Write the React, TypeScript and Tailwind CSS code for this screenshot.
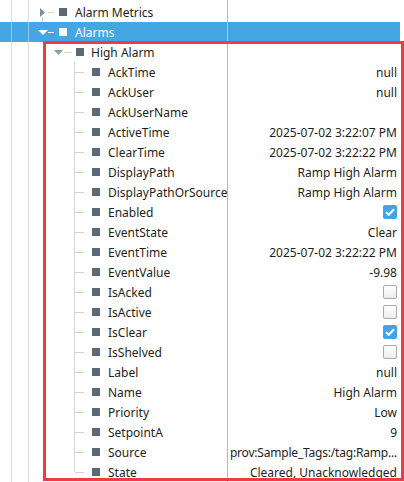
import React from "react";

interface PropRow {
  label: string;
  value?: string;
  check?: boolean;
}

const props: PropRow[] = [
  { label: "AckTime", value: "null" },
  { label: "AckUser", value: "null" },
  { label: "AckUserName", value: "" },
  { label: "ActiveTime", value: "2025-07-02 3:22:07 PM" },
  { label: "ClearTime", value: "2025-07-02 3:22:22 PM" },
  { label: "DisplayPath", value: "Ramp High Alarm" },
  { label: "DisplayPathOrSource", value: "Ramp High Alarm" },
  { label: "Enabled", check: true },
  { label: "EventState", value: "Clear" },
  { label: "EventTime", value: "2025-07-02 3:22:22 PM" },
  { label: "EventValue", value: "-9.98" },
  { label: "IsAcked", check: false },
  { label: "IsActive", check: false },
  { label: "IsClear", check: true },
  { label: "IsShelved", check: false },
  { label: "Label", value: "null" },
  { label: "Name", value: "High Alarm" },
  { label: "Priority", value: "Low" },
  { label: "SetpointA", value: "9" },
  { label: "Source", value: "prov:Sample_Tags:/tag:Ramp..." },
  { label: "State", value: "Cleared, Unacknowledged" },
];

// the two ancestor guide lines at x=11 and x=28
const Guides = ({ selected }: { selected?: boolean }) => (
  <>
    <div className="w-[11px] flex-none" />
    <div className={selected ? "w-px flex-none self-stretch bg-[#8ccaf0]" : "w-px flex-none self-stretch bg-[#dedede]"} />
    <div className="w-[16px] flex-none" />
    <div className={selected ? "w-px flex-none self-stretch bg-[#8ccaf0]" : "w-px flex-none self-stretch bg-[#dedede]"} />
  </>
);

const Separator = ({ selected }: { selected?: boolean }) => (
  <div className={selected ? "w-px flex-none self-stretch bg-[#9fd0f0]" : "w-px flex-none self-stretch bg-[#b8b8b8]"} />
);

const Square = ({ color }: { color: string }) => (
  <div className={`w-2 h-2 flex-none ${color}`} />
);

const Checkbox = ({ checked }: { checked: boolean }) =>
  checked ? (
    <div className="w-[14px] h-[14px] rounded-[2px] bg-[#44a3e6] flex items-center justify-center">
      <svg width="10" height="8" viewBox="0 0 10 8">
        <path d="M1 4.2 L3.8 6.8 L9 1.2" stroke="#fff" strokeWidth="2" fill="none" />
      </svg>
    </div>
  ) : (
    <div className="w-[14px] h-[14px] rounded-[2px] border border-[#a9a9a9] bg-gradient-to-b from-white to-[#ececec]" />
  );

const ChildRow = ({ row, last }: { row: PropRow; last: boolean }) => (
  <div className="flex h-5 items-stretch">
    <div className="flex w-[227px] flex-none items-center overflow-hidden">
      <Guides />
      <div className="w-[45px] flex-none" />
      <div className="w-px flex-none self-stretch flex flex-col">
        <div className={last ? "h-[10px] bg-[#d2d2d2]" : "flex-1 bg-[#d2d2d2]"} />
      </div>
      <div className="w-[9px] h-px flex-none bg-[#d2d2d2]" />
      <div className="w-[8px] flex-none" />
      <Square color="bg-[#5b6878]" />
      <div className="w-[8px] flex-none" />
      <span className="mt-[2px] whitespace-nowrap">{row.label}</span>
    </div>
    <Separator />
    <div className="flex flex-1 min-w-0 items-center justify-end pr-[3px] whitespace-nowrap">
      {row.check !== undefined ? (
        <Checkbox checked={row.check} />
      ) : (
        <span className={row.label === "Source" ? "mt-[2px] tracking-[-0.2px]" : "mt-[2px]"}>{row.value}</span>
      )}
    </div>
  </div>
);

export default function App() {
  return (
    <div className="relative w-[404px] h-[482px] overflow-hidden bg-white text-[12px] leading-5 text-[#1e1e1e] font-['Noto_Sans',sans-serif]">
      <div className="flex w-[400px] flex-col">
        {/* tail of the row above */}
        <div className="flex h-[2px]">
          <div className="flex w-[227px] flex-none">
            <Guides />
          </div>
          <Separator />
        </div>

        {/* Alarm Metrics */}
        <div className="flex h-5 items-stretch">
          <div className="flex w-[227px] flex-none items-center">
            <Guides />
            <div className="w-[8px] flex-none" />
            <div className="w-[11px] flex-none self-stretch flex flex-col items-center">
              <div className="flex-1" />
              <svg width="5" height="9" viewBox="0 0 5 9" className="flex-none">
                <path d="M0 0 L5 4.5 L0 9 Z" fill="#7a8ea4" />
              </svg>
              <div className="flex-1 w-px bg-[#d2d2d2]" />
            </div>
            <div className="w-[6px] h-px flex-none bg-[#d2d2d2]" />
            <div className="w-[5px] flex-none" />
            <Square color="bg-[#5b6878]" />
            <div className="w-[8px] flex-none" />
            <span className="mt-[2px] whitespace-nowrap">Alarm Metrics</span>
          </div>
          <Separator />
        </div>

        {/* Alarms (selected) */}
        <div className="flex h-5 items-stretch bg-[#44a6e3] text-white">
          <div className="flex w-[227px] flex-none items-center">
            <Guides selected />
            <div className="w-[8px] flex-none" />
            <div className="w-[11px] flex-none flex justify-center">
              <svg width="10" height="5" viewBox="0 0 10 5">
                <path d="M0 0 H10 L5 5 Z" fill="#ffffff" />
              </svg>
            </div>
            <div className="w-[6px] h-px flex-none bg-white" />
            <div className="w-[5px] flex-none" />
            <Square color="bg-white" />
            <div className="w-[8px] flex-none" />
            <span className="mt-[2px] whitespace-nowrap">Alarms</span>
          </div>
          <Separator selected />
        </div>

        {/* High Alarm */}
        <div className="flex h-5 items-stretch">
          <div className="flex w-[227px] flex-none items-center">
            <Guides />
            <div className="w-[24px] flex-none" />
            <div className="w-[11px] flex-none flex justify-center">
              <svg width="9" height="5" viewBox="0 0 9 5">
                <path d="M0 0 H9 L4.5 5 Z" fill="#8a9cb1" />
              </svg>
            </div>
            <div className="w-[8px] h-px flex-none bg-[#d2d2d2]" />
            <div className="w-[4px] flex-none" />
            <Square color="bg-[#5b6878]" />
            <div className="w-[7px] flex-none" />
            <span className="mt-[2px] whitespace-nowrap">High Alarm</span>
          </div>
          <Separator />
        </div>

        {props.map((row, i) => (
          <ChildRow key={row.label} row={row} last={i === props.length - 1} />
        ))}
      </div>

      {/* red annotation frame */}
      <div className="pointer-events-none absolute left-[43px] top-[41px] w-[361px] h-[440px] border-[3px] border-[#ec3d45]" />
    </div>
  );
}
